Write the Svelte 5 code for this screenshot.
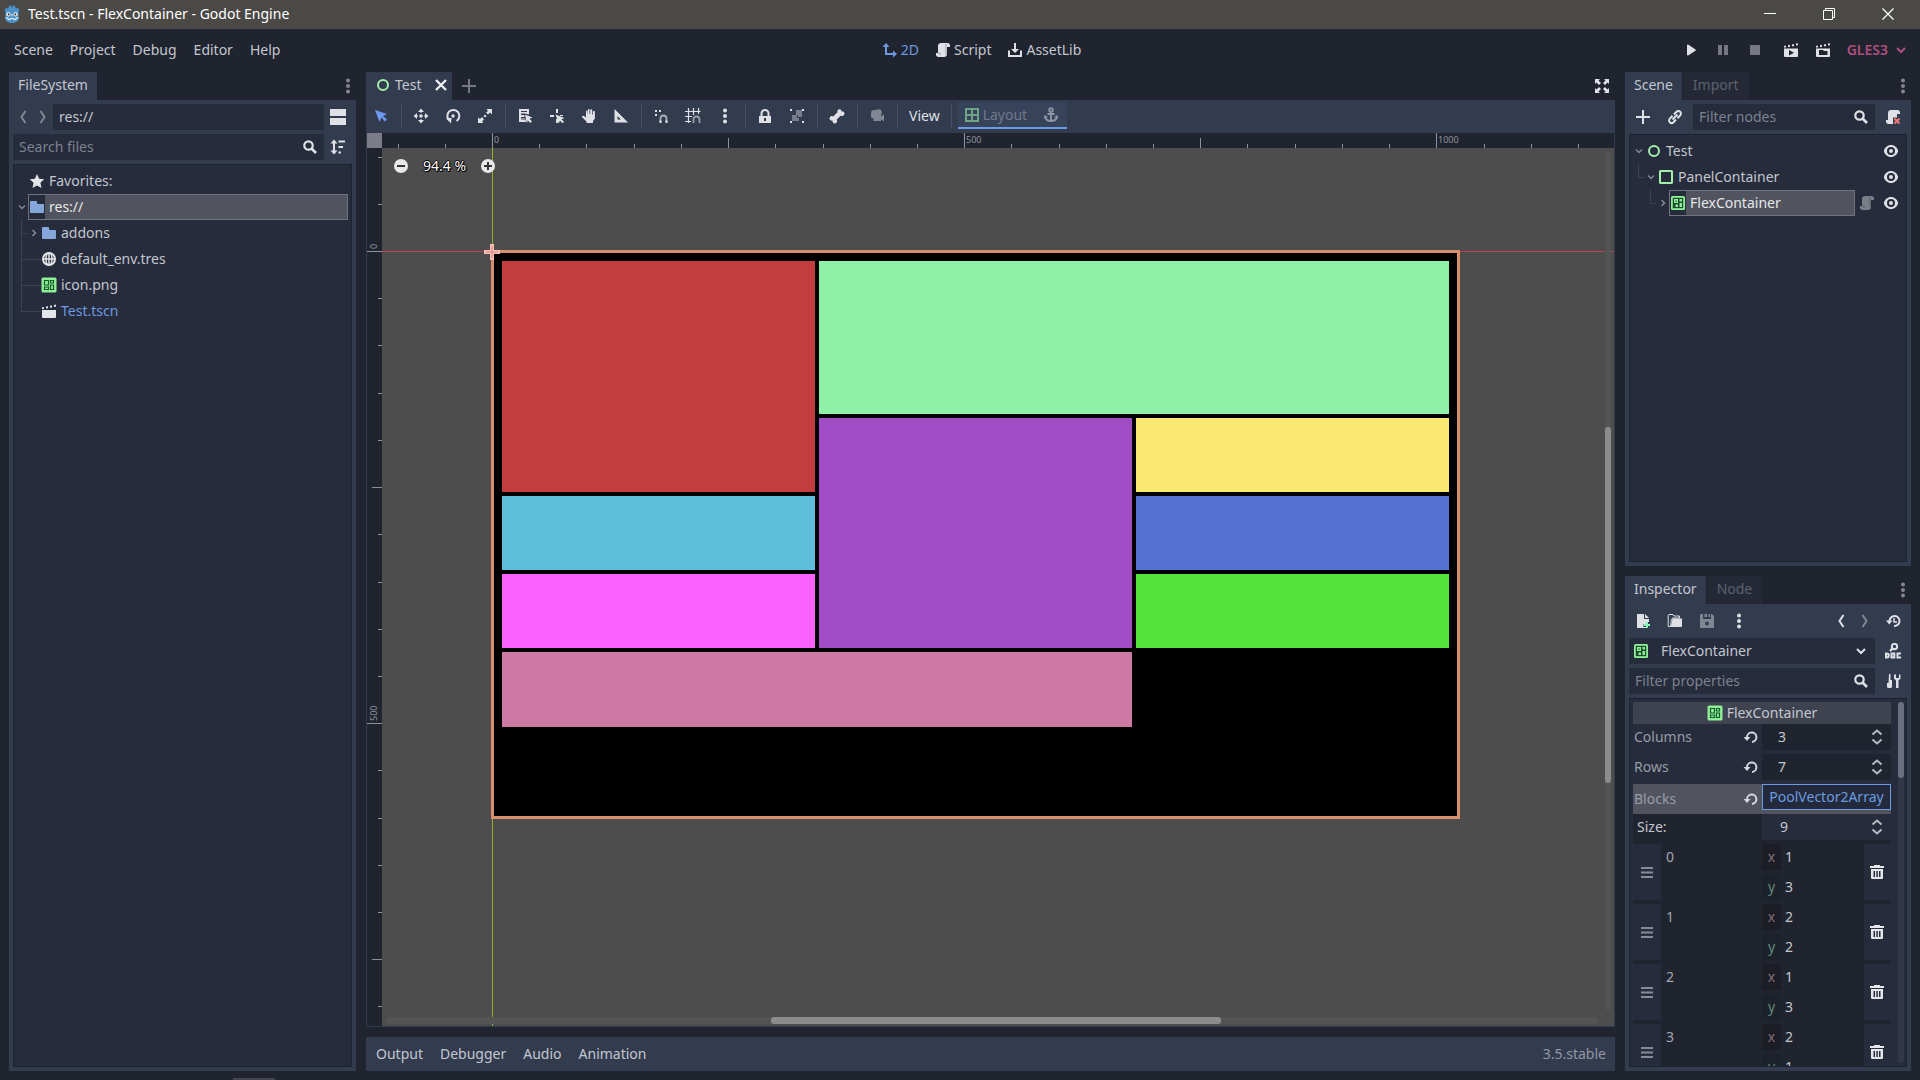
<script>
  const icons = {
    folder: '<path d="M2 2a1 1 0 0 0-1 1v10a1 1 0 0 0 1 1h12a1 1 0 0 0 1-1V6a1 1 0 0 0-1-1h-5a1 1 0 0 1-1-1V3a1 1 0 0 0-1-1z"/>',
    star: '<path d="M8 1l2.100 4.800 5.100.5-3.800 3.500 1.100 5.200L8 12.400 3.500 15l1.100-5.200L.8 6.300l5.100-.5z"/>',
    globe: '<g fill="none" stroke="currentColor"><circle cx="8" cy="8" r="6" stroke-width="2"/><ellipse cx="8" cy="8" rx="3" ry="6" stroke-width="1.500"/><path d="M2 8h12M8 2v12" stroke-width="1.500"/></g>',
    flex: '<rect x="0.500" y="0.500" width="15" height="15" rx="1.500" fill="#8eef97"/><g fill="none" stroke="#155a2c" stroke-width="1.200"><path d="M3.500 3.500h4v4.500h-4zM9.500 3.500h3v2.500h-3zM9.500 8h3v4.500h-3zM3.500 10h4v2.500h-4z"/></g>',
    flexdark: '<rect x="1" y="1" width="14" height="14" rx="1.500" fill="#8eef97"/><rect x="2.800" y="2.800" width="10.400" height="10.400" fill="#1c4a2c"/><path d="M4 4h4v4H4zM9.500 4H12v2.500H9.500zM9.500 8H12v4H9.500zM5.500 9.500H8V12H5.500z" fill="#8eef97"/><path d="M5.500 5.500h1.200v1.200H5.500z" fill="#1c4a2c"/>',
    scene: '<path d="M1 7h14v7a1 1 0 0 1-1 1H2a1 1 0 0 1-1-1z"/><path d="M1 4.500l2-.4v2H1zM5 3.600l2-.4v2l-2 .4zM9 2.800l2-.4v2l-2 .4zM13 2l2-.4v2l-2 .4z"/>',
    search: '<circle cx="6.500" cy="6.500" r="4.200" fill="none" stroke="currentColor" stroke-width="2.200"/><path d="M9.500 9.500l4.500 4.500" stroke="currentColor" stroke-width="2.600"/>',
    split: '<path d="M0 0h16v7H0zM0 9h16v7H0z"/>',
    sort: '<path d="M4 0.500l3.500 4H5v7h2.500L4 15.500.5 11.500H3v-7H.5zM8.500 1.500h6.500v2H8.500zM8.500 7h4.500v2H8.500zM8.500 12.500h2.500v2H8.500z"/>',
    dots: '<circle cx="8" cy="2.500" r="2"/><circle cx="8" cy="8" r="2"/><circle cx="8" cy="13.500" r="2"/>',
    left: '<path d="M10.500 2L6.500 8l4 6" fill="none" stroke="currentColor" stroke-width="2"/>',
    right: '<path d="M5.500 2l4 6-4 6" fill="none" stroke="currentColor" stroke-width="2"/>',
    down: '<path d="M4 6l4 4 4-4" fill="none" stroke="currentColor" stroke-width="2"/>',
    fold: '<path d="M6 4l4 4-4 4" fill="none" stroke="currentColor" stroke-width="2"/>',
    two: '<path d="M4 1l3.500 4H5v6h6V8.500l4 3.500-4 3.500V13H3V5H.5z"/>',
    script: '<path d="M6 1c-1.700 0-3 1.300-3 3v7H1v1.500C1 14 2 15 3.500 15H9c1.700 0 3-1.300 3-3V5h3V3.500C15 2 14 1 12.500 1z"/><path d="M11 2v10.500M3.500 11H5v2" stroke="#20242f" stroke-width=".8" fill="none" opacity=".45"/>',
    asset: '<path d="M7 1h2v6h3l-4 4-4-4h3z"/><path d="M2 8.500V14h12V8.500" fill="none" stroke="currentColor" stroke-width="2"/>',
    play: '<path d="M4 3.200v9.600c0 .6.600.900 1.100.6l7.400-4.700c.5-.3.500-1 0-1.300L5.100 2.600C4.600 2.300 4 2.600 4 3.200z"/>',
    pause: '<path d="M3 3h4v10H3zM9 3h4v10H9z"/>',
    stop: '<rect x="3" y="3" width="10" height="10" rx="1"/>',
    playscene: '<path fill-rule="evenodd" d="M1 6.500h14V14a1 1 0 0 1-1 1H2a1 1 0 0 1-1-1zM6 8v5.500l5-2.700z"/><path d="M1 4l2-.4v2H1zM5 3.200l2-.4v2l-2 .4zM9 2.400l2-.4v2l-2 .4zM13 1.600l2-.4v2l-2 .4z"/>',
    playcustom: '<path fill-rule="evenodd" d="M1 6.500h14V14a1 1 0 0 1-1 1H2a1 1 0 0 1-1-1zM4 8v5h8.500V9H9L8 8z"/><path d="M1 4l2-.4v2H1zM5 3.200l2-.4v2l-2 .4zM9 2.400l2-.4v2l-2 .4zM13 1.600l2-.4v2l-2 .4z"/>',
    expand: '<path d="M1 1h5L4.500 2.500l2.500 2.500L5 7 2.500 4.500 1 6zM15 1v5l-1.500-1.500L11 7 9 5l2.500-2.500L10 1zM1 15v-5l1.500 1.500L5 9l2 2-2.500 2.500L6 15zM15 15h-5l1.500-1.500L9 11l2-2 2.500 2.500L15 10z"/>',
    close: '<path d="M3 3l10 10M13 3L3 13" stroke="currentColor" stroke-width="2.400"/>',
    plus: '<path d="M8 1v14M1 8h14" stroke="currentColor" stroke-width="2"/>',
    node: '<circle cx="8" cy="8" r="5" fill="none" stroke="#a5efac" stroke-width="2"/>',
    panel: '<rect x="2" y="2" width="12" height="12" rx=".5" fill="none" stroke="#a5efac" stroke-width="2"/>',
    select: '<path d="M2 2l4.500 12 2-4.500 3.500 4 2-2-4-3.500L14 6z"/>',
    move: '<circle cx="8" cy="8" r="1.800"/><path d="M8 0.500l3 3.500H9L8 5 7 4H5zM8 15.500l3-3.500H9l-1-1-1 1H5zM.5 8L4 5v2l1 1-1 1v2zM15.500 8L12 5v2l-1 1 1 1v2z"/>',
    rotate: '<circle cx="8" cy="8" r="1.700"/><path d="M4.500 12.500A6 6 0 1 1 11.500 13" fill="none" stroke="currentColor" stroke-width="2"/><path d="M1 10h5.500L6 15.500z"/>',
    scale: '<path d="M9.500 1H15v5.500l-2-2-2 2L9 4.500l2-1.500zM1 9.500V15h5.500L5 13.500l2-2L5 9 3 11zM8 6.500L9.500 8 8 9.500 6.500 8z"/>',
    list: '<path fill-rule="evenodd" d="M2 1h10v5.500L8 5.500H4V7h3l.8 2H4v1.500h4l1 3V14H2zM4 3v1h6V3zM4 12h4v-.5H4z"/><path d="M8 6.500l7.500 3-3 1.200 2.500 2.600-1.700 1.700-2.500-2.500-1 2.700z"/>',
    pivot: '<path d="M7 1h2v4H7zM1 7h4v2H1zM7 11h2v4H7zM11 7h3v1h-3zM6.500 6.500l9 3.500-3 1.200 2.500 2.600-1.500 1.500-2.500-2.500-1.200 2.700z"/>',
    hand: '<path d="M7.500 1c.6 0 1 .4 1 1v4h.7V2.300c0-.6.400-1 1-1s1 .4 1 1V6.500h.7V4c0-.6.400-1 1-1s1 .4 1 1v6.500L12 13v2H5.500v-1.500L1.200 9.200c-.4-.5-.3-1 .2-1.300.8-.4 1.600 0 2 .4L5 9.500V3.500c0-.6.300-1 .8-1s.9.4.9 1V6h.3V2c0-.6 0-1 .5-1z"/>',
    ruler: '<path fill-rule="evenodd" d="M1.500 1v13.500H15zM4.500 8v3.500H8z"/>',
    snap: '<path d="M2 2h2v2H2zM6 2h2v2H6zM2 6h2v2H2z"/><path d="M7.500 14v-3.500a3 3 0 0 1 6 0V14" fill="none" stroke="currentColor" stroke-width="1.800" opacity=".7"/><path d="M6.500 12.500h2V15h-2zM12.500 12.500h2V15h-2z"/>',
    grid: '<path d="M3.500 0v15M8.500 0v7M13.500 0v6M0 3.500h15.500M0 8.500h7M0 13.500h6" stroke="currentColor" stroke-width="1.200"/><path d="M8.500 15v-3.500a3 3 0 0 1 6 0V15" fill="none" stroke="currentColor" stroke-width="1.800" opacity=".6"/>',
    lock: '<path fill-rule="evenodd" d="M8 1a4.500 4.500 0 0 0-4.500 4.500V8H2v7h12V8h-1.500V5.500A4.500 4.500 0 0 0 8 1zM8 3a2.500 2.500 0 0 1 2.500 2.500V8h-5V5.500A2.500 2.500 0 0 1 8 3zM7 10h2v3H7z"/>',
    group: '<path d="M1 1h2v2H1zM13 1h2v2h-2zM1 13h2v2H1zM13 13h2v2h-2z"/><path d="M7 2h6v7h-4V7H7zM3 7h5v3h2v3H3z" opacity=".4"/>',
    bone: '<path d="M10.500 1.200a2.200 2.200 0 0 0-2 3L4.200 8.500a2.300 2.300 0 1 0-.6 4 2.300 2.300 0 1 0 4-.7l4.200-4.300a2.300 2.300 0 1 0 .7-4 2.200 2.200 0 0 0-2-2.300z"/>',
    camera: '<circle cx="5" cy="5" r="3"/><circle cx="9.500" cy="4.500" r="3.300"/><path d="M2 6h10v2.500l3-2v7l-3-2V13H4.500v-2.500L2 9.500z"/>',
    layout: '<path d="M2 2h12v12H2zM8 2v12M2 8h12" fill="none" stroke="#8fd69b" stroke-width="2"/>',
    anchor: '<g fill="none" stroke="currentColor" stroke-width="1.800"><circle cx="8" cy="3" r="1.800"/><path d="M8 5v9M4.500 7h7M2 9.500C2.500 12.500 5 14 8 14s5.500-1.500 6-4.500"/></g><path d="M.8 11.500L1.500 8 5 10zM15.200 11.500L14.500 8 11 10z"/>',
    link: '<g fill="none" stroke="currentColor" stroke-width="2"><path d="M7 5.500l2.500-2.700a2.500 2.500 0 0 1 3.700 3.600L10.500 9.300M9 10.500l-2.500 2.700a2.500 2.500 0 0 1-3.700-3.600l2.700-2.900M5.500 10.500l5-5"/></g>',
    scriptx: '<path d="M6 1c-1.700 0-3 1.300-3 3v7H1v1.500C1 14 2 15 3.500 15H8V8.500h4V5h3V3.500C15 2 14 1 12.500 1z"/><path d="M9.500 9.500l5 5M14.500 9.500l-5 5" stroke="#ee7272" stroke-width="2.200"/>',
    eye: '<path fill-rule="evenodd" d="M8 2C4.500 2 1.700 4.500.8 8c.9 3.500 3.700 6 7.200 6s6.300-2.500 7.200-6C14.300 4.500 11.500 2 8 2zM8 4a4 4 0 1 1 0 8 4 4 0 0 1 0-8z"/><circle cx="8" cy="8" r="2"/>',
    newfile: '<path d="M2 1h7v5h5v3h-3v2H8.500v3H11v1H2zM10 1l4 4h-4z"/><path d="M12 9v6M9 12h6" stroke="#84ffb9" stroke-width="2"/>',
    open: '<path d="M2 1.500h4l1 1.500h5.500v2H5.500L4 8v4L2 14a1 1 0 0 1-.8-1V2.500a1 1 0 0 1 .8-1z" fill="none" stroke="currentColor"/><path d="M5.500 5.500h9.500v7.500a1 1 0 0 1-1 1H2.500L4 13z"/>',
    save: '<path fill-rule="evenodd" d="M2 1h2v5h8V1h1l2 2v11a1 1 0 0 1-1 1H2a1 1 0 0 1-1-1V2a1 1 0 0 1 1-1zM5.500 1H8v3H5.500zM9.500 1H11v3H9.500zM8 8.500a2 2 0 1 0 0 4 2 2 0 0 0 0-4z"/>',
    history: '<path d="M4.500 8A5 5 0 1 1 9 13" fill="none" stroke="currentColor" stroke-width="2"/><path d="M9 5v4h3" fill="none" stroke="currentColor" stroke-width="1.500"/><path d="M1 7.500h6.500L4.200 11.500z"/>',
    revert: '<path d="M4 8.500a4.700 4.700 0 1 1 5 4.500" fill="none" stroke="currentColor" stroke-width="2"/><path d="M.5 8h7L4 12z"/>',
    doc: '<circle cx="9.500" cy="3.500" r="2.700" fill="none" stroke="currentColor" stroke-width="2"/><path d="M7.500 5.500L5 8" stroke="currentColor" stroke-width="2.400"/><g fill="none" stroke="currentColor" stroke-width="2"><path d="M1 10.500v4h.8c2.700 0 2.700-4 0-4zM6.500 10.500h2.800v4H6.500zM16 10.500h-3.500v4H16"/></g>',
    tools: '<path d="M4 1h1.500v6H7v6.500a1.500 1.500 0 0 1-1.500 1.500h-2A1.500 1.500 0 0 1 2 13.500V10h1.500zM9 1.500v4l2 2V15h2.500V7.500l2-2v-4H14V5h-3V1.500z"/>',
    spin: '<path d="M3.500 5.500L8 1.500l4.500 4M3.500 10.500l4.500 4 4.500-4" fill="none" stroke="currentColor" stroke-width="2"/>',
    bars: '<path d="M2 3h12v2H2zM2 7.500h12v2H2zM2 12h12v2H2z"/>',
    trash: '<path fill-rule="evenodd" d="M5 1h6v1h4v2H1V2h4zM2 5h12v9a1 1 0 0 1-1 1H3a1 1 0 0 1-1-1zM4.500 7v6H6V7zM7.300 7v6h1.500V7zM10 7v6h1.500V7z"/>',
    minus: '<circle cx="8" cy="8" r="7" fill="#e8e8e8"/><path d="M4 8h8" stroke="#333" stroke-width="2"/>',
    plusround: '<circle cx="8" cy="8" r="7" fill="#e8e8e8"/><path d="M4 8h8M8 4v8" stroke="#333" stroke-width="2"/>',
    godot: '<path d="M1.500 5l1-2.500 1.500.7L5 2.500 5.200.8 7 .3 7.600 2h.8L9 .3l1.800.5.2 1.700 1 .7 1.500-.7 1 2.500-.7 1v6c0 2.500-2.500 4-5.800 4s-5.800-1.500-5.800-4V6z" fill="#4a92c9"/><circle cx="4.800" cy="8.300" r="1.900" fill="#fff"/><circle cx="11.200" cy="8.300" r="1.900" fill="#fff"/><circle cx="5" cy="8.400" r="1" fill="#414042"/><circle cx="11" cy="8.400" r="1" fill="#414042"/><path d="M8 8v2M2 11.500h2.500v1.500h2v-1h3v1h2v-1.500H14" fill="none" stroke="#fff" stroke-width=".8"/>',
    wmin: '<path d="M2 7.500h12" stroke="#fff" stroke-width="1"/>',
    wmax: '<path d="M2.500 4.500h9v9h-9zM4.500 4.500v-2h9v9h-2" fill="none" stroke="#fff" stroke-width="1"/>',
    wclose: '<path d="M2.500 2.500l11 11M13.500 2.500l-11 11" stroke="#fff" stroke-width="1.200"/>'
  };

  const tools = [
    ['select', 'accent'], '|', ['move'], ['rotate'], ['scale'], '|', ['list'], ['pivot'], ['hand'], ['ruler'], '|',
    ['snap'], ['grid'], ['dots'], '|', ['lock'], ['group'], '|', ['bone'], '|', ['camera', 'off'], '|'
  ];

  // Canvas geometry: screen pixels per project unit and where the origin falls.
  const scale = 0.9443;
  const origin = { x: 110, y: 103 };
  const ticks = (start, count) =>
    Array.from({ length: count }, (_, i) => {
      const n = i + start;
      return { at: Math.round(n * 50 * scale), len: n % 10 === 0 ? 15 : n % 5 === 0 ? 10 : 4, label: n % 10 === 0 ? n * 50 : null };
    });
  const hTicks = ticks(-2, 26);
  const vTicks = ticks(-2, 20);

  const blocks = [
    { c: '#c23d3e', col: '1', row: '1 / 4' },
    { c: '#8ff0a8', col: '2 / 4', row: '1 / 3' },
    { c: '#a04dc5', col: '2', row: '3 / 6' },
    { c: '#f9e973', col: '3', row: '3' },
    { c: '#5fbfdb', col: '1', row: '4' },
    { c: '#5371cf', col: '3', row: '4' },
    { c: '#f962fd', col: '1', row: '5' },
    { c: '#53e33b', col: '3', row: '5' },
    { c: '#cd79a4', col: '1 / 3', row: '6' }
  ];

  const vectors = [[1, 3], [2, 2], [1, 3], [2, 1]];
</script>

{#snippet icon(name)}
  <svg class="ic" viewBox="0 0 16 16" aria-hidden="true">{@html icons[name]}</svg>
{/snippet}

{#snippet btn(name, label, cls = '')}
  <button class="ib {cls}" aria-label={label}>{@render icon(name)}</button>
{/snippet}

<div class="app">
  <header class="title">
    <span class="name">{@render icon('godot')}Test.tscn - FlexContainer - Godot Engine</span>
    <span class="win">
      {@render btn('wmin', 'Minimize')}
      {@render btn('wmax', 'Restore')}
      {@render btn('wclose', 'Close')}
    </span>
  </header>

  <nav class="menu">
    <div class="group names">
      {#each ['Scene', 'Project', 'Debug', 'Editor', 'Help'] as m}<button class="txt">{m}</button>{/each}
    </div>
    <div class="group modes">
      <button class="txt accent">{@render icon('two')}2D</button>
      <button class="txt">{@render icon('script')}Script</button>
      <button class="txt">{@render icon('asset')}AssetLib</button>
    </div>
    <div class="group run">
      {@render btn('play', 'Play')}
      {@render btn('pause', 'Pause', 'off')}
      {@render btn('stop', 'Stop', 'off stop')}
      {@render btn('playscene', 'Play scene')}
      {@render btn('playcustom', 'Play custom scene')}
      <button class="txt gles">GLES3 {@render icon('down')}</button>
    </div>
  </nav>

  <main>
    <section class="dock files">
      <div class="tabs">
        <button class="tab on">FileSystem</button>
        {@render btn('dots', 'Dock options', 'end off')}
      </div>
      <div class="panel">
        <div class="bar">
          {@render btn('left', 'Back', 'nav off')}
          {@render btn('right', 'Forward', 'nav off')}
          <label class="field"><input value="res://" aria-label="Path" /></label>
          {@render btn('split', 'Toggle split', 'side')}
        </div>
        <div class="bar">
          <label class="field"><input placeholder="Search files" aria-label="Search files" />{@render icon('search')}</label>
          {@render btn('sort', 'Sort', 'side')}
        </div>
        <ul class="tree">
          <li class="row"><span class="arrow"></span><span class="item">{@render icon('star')}Favorites:</span></li>
          <li class="row">
            <span class="arrow">{@render icon('down')}</span>
            <span class="item sel"><i class="blue">{@render icon('folder')}</i>res://</span>
          </li>
          <li class="row l1 guide"><span class="arrow">{@render icon('fold')}</span><span class="item"><i class="blue">{@render icon('folder')}</i>addons</span></li>
          <li class="row l1 guide long"><span class="arrow"></span><span class="item">{@render icon('globe')}default_env.tres</span></li>
          <li class="row l1 guide long"><span class="arrow"></span><span class="item">{@render icon('flex')}icon.png</span></li>
          <li class="row l1 guide long last"><span class="arrow"></span><span class="item">{@render icon('scene')}<b>Test.tscn</b></span></li>
        </ul>
      </div>
    </section>

    <section class="center">
      <div class="tabs">
        <button class="tab on scene-tab">{@render icon('node')}Test {@render icon('close')}</button>
        {@render btn('plus', 'Add scene', 'off add')}
        {@render btn('expand', 'Distraction free', 'end')}
      </div>
      <div class="tools">
        {#each tools as t}
          {#if t === '|'}<span class="sep"></span>{:else}{@render btn(t[0], t[0], t[1])}{/if}
        {/each}
        <button class="txt view">View</button>
        <span class="sep"></span>
        <div class="layout">
          <button class="txt">{@render icon('layout')}Layout</button>
          {@render btn('anchor', 'Anchors')}
        </div>
      </div>
      <div class="viewport">
        <div class="corner"></div>
        <svg class="ruler hr">
          {#each hTicks as t}
            <rect x={origin.x + t.at} y={15 - t.len} width="1" height={t.len} />
            {#if t.label !== null}<text x={origin.x + t.at + 2} y="10">{t.label}</text>{/if}
          {/each}
        </svg>
        <svg class="ruler vr">
          {#each vTicks as t}
            <rect x={15 - t.len} y={origin.y + t.at} width={t.len} height="1" />
            {#if t.label !== null}<text transform="translate(10 {origin.y + t.at - 2}) rotate(-90)">{t.label}</text>{/if}
          {/each}
        </svg>
        <div class="canvas">
          <div class="axis-x"></div>
          <div class="axis-y"></div>
          <div class="frame">
            {#each blocks as b}
              <div style="background:{b.c};grid-column:{b.col};grid-row:{b.row}"></div>
            {/each}
          </div>
          <svg class="pivot" viewBox="0 0 16 16"><path d="M6 0h4v6h6v4h-6v6H6v-6H0V6h6z" fill="#f5c0b4" /><path d="M2 8h12M8 2v12" stroke="#e08080" stroke-width="1" /></svg>
          <div class="zoom">
            {@render btn('minus', 'Zoom out')}
            <span>94.4 %</span>
            {@render btn('plusround', 'Zoom in')}
          </div>
          <div class="vscroll"><div></div></div>
          <div class="hscroll"><div></div></div>
        </div>
      </div>
      <div class="bottom">
        {#each ['Output', 'Debugger', 'Audio', 'Animation'] as m}<button class="txt">{m}</button>{/each}
        <span class="version">3.5.stable</span>
      </div>
    </section>

    <div class="right">
      <section class="dock">
        <div class="tabs">
          <button class="tab on">Scene</button><button class="tab">Import</button>
          {@render btn('dots', 'Dock options', 'end off')}
        </div>
        <div class="panel">
          <div class="bar">
            {@render btn('plus', 'Add node')}
            {@render btn('link', 'Instance scene')}
            <label class="field"><input placeholder="Filter nodes" aria-label="Filter nodes" />{@render icon('search')}</label>
            {@render btn('scriptx', 'Detach script')}
          </div>
          <ul class="tree">
            <li class="row"><span class="arrow">{@render icon('down')}</span><span class="item">{@render icon('node')}Test</span>{@render btn('eye', 'Visible', 'eye')}</li>
            <li class="row l1 guide"><span class="arrow">{@render icon('down')}</span><span class="item">{@render icon('panel')}PanelContainer</span>{@render btn('eye', 'Visible', 'eye')}</li>
            <li class="row l2 guide"><span class="arrow">{@render icon('fold')}</span><span class="item sel"><i>{@render icon('flexdark')}</i>FlexContainer</span>{@render btn('script', 'Script', 'eye off')}{@render btn('eye', 'Visible', 'eye')}</li>
          </ul>
        </div>
      </section>

      <section class="dock">
        <div class="tabs">
          <button class="tab on">Inspector</button><button class="tab">Node</button>
          {@render btn('dots', 'Dock options', 'end off')}
        </div>
        <div class="panel">
          <div class="bar">
            {@render btn('newfile', 'New resource')}
            {@render btn('open', 'Open resource')}
            {@render btn('save', 'Save resource', 'off')}
            {@render btn('dots', 'More')}
            <span class="grow"></span>
            {@render btn('left', 'Previous', 'step')}
            {@render btn('right', 'Next', 'step off')}
            {@render btn('history', 'History')}
          </div>
          <div class="bar">
            <label class="field object">{@render icon('flexdark')}
              <select aria-label="Edited object"><option>FlexContainer</option></select>
              <i>{@render icon('down')}</i></label>
            {@render btn('doc', 'Documentation')}
          </div>
          <div class="bar">
            <label class="field"><input placeholder="Filter properties" aria-label="Filter properties" />{@render icon('search')}</label>
            {@render btn('tools', 'Property tools')}
          </div>
          <div class="inspect">
            <div class="props">
              <h2>{@render icon('flex')}FlexContainer</h2>
              {#each [['Columns', 3], ['Rows', 7]] as [name, v]}
                <div class="prop">
                  <label for={name}>{name}</label>{@render btn('revert', 'Revert', 'rev')}
                  <span class="value"><input id={name} value={v} />{@render icon('spin')}</span>
                </div>
              {/each}
              <div class="prop blocks">
                <span class="lab">Blocks</span>{@render btn('revert', 'Revert', 'rev')}
                <button class="array">PoolVector2Array</button>
              </div>
              <div class="sub">
                <div class="prop size">
                  <label for="size">Size:</label>
                  <span class="value"><input id="size" value="9" />{@render icon('spin')}</span>
                </div>
                {#each vectors as v, i}
                  <div class="vec">
                    <button class="cell handle" aria-label="Reorder">{@render icon('bars')}</button>
                    <span class="idx">{i}</span>
                    <div class="pair">
                      <label><span class="x">x</span><input value={v[0]} /></label>
                      <label><span class="y">y</span><input value={v[1]} /></label>
                    </div>
                    <button class="cell bin" aria-label="Remove">{@render icon('trash')}</button>
                  </div>
                {/each}
              </div>
            </div>
            <div class="pscroll"><div></div></div>
          </div>
        </div>
      </section>
    </div>
  </main>
  <footer><div></div></footer>
</div>

<style>
  :global(body) { background: #20242f; }
  .app {
    --base: #333b4f; --dark: #262c3b; --bg: #20242f; --text: #c3c7cf; --accent: #6d9ae0;
    height: 100vh; display: flex; flex-direction: column; overflow: hidden;
    background: var(--bg); color: var(--text);
    font: 14px/20px "Noto Sans", "Open Sans", sans-serif;
  }
  * { box-sizing: border-box; }
  button, input, select { font: inherit; color: inherit; background: none; border: 0; padding: 0; margin: 0; min-width: 0; border-radius: 0; outline: 0; }
  .ic { width: 16px; height: 16px; flex: none; display: block; fill: currentColor; }
  .ib { width: 32px; height: 26px; display: flex; align-items: center; justify-content: center; color: #dfe1e6; flex: none; }
  .off { opacity: 0.45; }
  .accent { color: var(--accent); }
  .txt { display: flex; align-items: center; gap: 3px; padding: 0 8px; white-space: nowrap; }

  .title { height: 29px; flex: none; background: #4a4945; color: #fff; display: flex; align-items: center; justify-content: space-between; padding: 0 3px 2px; }
  .name { display: flex; align-items: center; gap: 7px; }
  .name .ic { width: 18px; height: 18px; }
  .win { display: flex; }
  .win .ib { width: 59px; }

  .menu { height: 43px; flex: none; display: flex; justify-content: space-between; padding: 0 11px 2px 6px; }
  .group { display: flex; align-items: center; }
  .names { gap: 1px; }
  .modes .ic { color: #dfe1e6; }
  .modes .accent .ic { color: var(--accent); }
  .run { color: #dfe1e6; }
  .run .stop { margin-right: 4px; }
  .gles { color: #ad4f7f; font-weight: 600; gap: 5px; padding: 0 0 0 8px; }

  main { flex: 1; min-height: 0; display: flex; gap: 10px; padding: 0 9px; }
  .dock { display: flex; flex-direction: column; min-height: 0; }
  .files { width: 347px; flex: none; }
  .right { width: 286px; flex: none; display: flex; flex-direction: column; gap: 10px; }
  .right .dock { flex: 1 1 0; }
  .right .dock:last-child { flex-basis: 1px; }
  .tabs { display: flex; height: 28px; flex: none; align-items: center; }
  .tab { height: 28px; padding: 0 10px 2px; color: #5c6270; background: #242935; margin-right: 1px; }
  .tab.on { background: var(--base); color: var(--text); padding: 0 9px 2px; }
  .end { margin-left: auto; width: 16px; }
  .dock .end { color: #fff; }
  .panel { flex: 1; min-height: 0; background: var(--base); padding: 4px; display: flex; flex-direction: column; gap: 4px; }
  .bar { display: flex; height: 26px; flex: none; }
  .right .bar { gap: 4px; }
  .right .bar .ib { width: 28px; }
  .right .bar .step { width: 20px; }
  .grow { flex: 1; }
  .field { flex: 1; min-width: 0; display: flex; align-items: center; background: var(--dark); padding: 0 6px 1px; }
  .field input { flex: 1; }
  .field .ic { color: #dfe1e6; }
  input::placeholder { color: #7c828f; opacity: 1; }
  .nav { width: 20px; }
  .side { width: 28px; }

  .tree { flex: 1; margin: 0; list-style: none; background: var(--dark); border: 1px solid #1d2230; padding: 3px; }
  .files .tree { padding-left: 2px; }
  .row { display: flex; height: 26px; align-items: center; position: relative; }
  .l1 { padding-left: 12px; }
  .l2 { padding-left: 24px; }
  .arrow { width: 12px; height: 16px; flex: none; display: flex; justify-content: center; color: #858a96; }
  .arrow .ic { width: 12px; }
  .item { flex: 1; display: flex; align-items: center; gap: 4px; height: 26px; border: 1px solid transparent; white-space: nowrap; color: var(--text); }
  .item .ic { color: #e4e6ea; }
  .item b { font-weight: 400; color: var(--accent); }
  .item i { display: flex; align-items: center; height: 24px; }
  .item .blue .ic { color: #86a7dc; }
  .sel { background: #51545f; border-color: #70737d; color: #e6e7ea; }
  .sel i { background: var(--dark); }
  .guide::before { content: ""; position: absolute; left: 5px; top: 0; width: 5px; height: 13px; border-left: 1px solid #3c4251; border-bottom: 1px solid #3c4251; }
  .files .guide::after { content: ""; position: absolute; left: 5px; top: 0; height: 26px; border-left: 1px solid #3c4251; }
  .files .last::after { height: 13px; }
  .long::before { width: 19px; }
  .l2.guide::before { left: 17px; }
  .eye { width: 24px; }

  .center { flex: 1; min-width: 0; display: flex; flex-direction: column; }
  .scene-tab { display: flex; align-items: center; gap: 4px; }
  .scene-tab .ic:last-child { color: #eceef2; margin: 0 -6px 0 8px; }
  .center .end { margin-right: 5px; }
  .tools { height: 33px; flex: none; background: var(--base); display: flex; align-items: center; padding-bottom: 2px; color: #dfe1e6; }
  .tools .accent { color: #6d9af0; margin-left: -1px; }
  .sep { width: 8px; height: 24px; flex: none; background: linear-gradient(#474e60, #474e60) center / 1px 100% no-repeat; }
  .layout { height: 27px; display: flex; align-items: center; background: #37435b; border-bottom: 2px solid var(--accent); margin-left: 2px; }
  .layout .txt { color: #717989; padding: 0 8px 0 6px; }
  .layout .txt .ic { opacity: 0.65; }
  .layout .ib { color: #8f97a6; }

  .viewport { flex: 1; min-height: 0; display: grid; grid-template: 15px 1fr / 15px 1fr; border: solid var(--base); border-width: 0 1px 1px; }
  .corner { background: #7b7d86; }
  .ruler { width: 100%; height: 100%; min-width: 0; min-height: 0; display: block; overflow: hidden; fill: #8e929b; font-size: 9px; }
  .canvas { position: relative; background: #4d4d4d; overflow: hidden; }
  .axis-x { position: absolute; left: 0; right: 0; top: 103px; height: 1px; background: #b8424f; }
  .axis-y { position: absolute; top: 0; bottom: 0; left: 110px; width: 1px; background: #8fb42c; }
  .frame {
    position: absolute; left: 109px; top: 102px; width: 969px; height: 569px; border: 3px solid #d98f6b; background: #000;
    display: grid; grid-template: repeat(7, 1fr) / repeat(3, 1fr); gap: 4px; padding: 8px 8px 11px;
  }
  .pivot { position: absolute; left: 102px; top: 96px; width: 16px; height: 16px; }
  .zoom { position: absolute; left: 11px; top: 8px; display: flex; align-items: center; gap: 14px; color: #fff; }
  .zoom .ib { width: 16px; height: 20px; }
  .zoom span { text-shadow: 1px 0 #000, -1px 0 #000, 0 1px #000, 0 -1px #000, 1px 1px #000; }
  .vscroll { position: absolute; right: 3px; top: 4px; bottom: 16px; width: 6px; background: #545454; border-radius: 3px; padding-top: 275px; }
  .vscroll div { height: 356px; background: #8c8c8c; border-radius: 3px; }
  .hscroll { position: absolute; left: 4px; right: 16px; bottom: 2px; height: 7px; background: #545454; border-radius: 3px; padding-left: 385px; }
  .hscroll div { width: 450px; height: 7px; background: #8c8c8c; border-radius: 3px; }

  .bottom { height: 34px; flex: none; margin-top: 10px; background: var(--base); display: flex; gap: 1px; align-items: center; padding: 0 9px 0 2px; }
  .version { margin-left: auto; color: #9197a4; }

  .object select { flex: 1; appearance: none; padding-left: 12px; }
  .object i { color: #a0a4ae; }
  .object .ic { margin-left: -2px; }
  .inspect { flex: 1; min-height: 0; background: var(--dark); border: 1px solid #1d2230; padding: 3px 2px 0 3px; display: flex; gap: 7px; overflow: hidden; }
  .props { flex: 1; min-width: 0; height: 100%; overflow: hidden; }
  h2 { margin: 0; font: inherit; height: 22px; background: #3e434f; display: flex; align-items: center; justify-content: center; gap: 4px; }
  .prop { display: flex; height: 26px; margin-bottom: 4px; align-items: center; }
  .prop label, .lab { flex: 1; color: #979ca7; padding-left: 1px; }
  .rev { width: 22px; color: #d5d8de; }
  .value { width: 129px; height: 26px; background: #20242f; display: flex; align-items: center; padding: 0 6px 0 16px; }
  .value input { flex: 1; }
  .value .ic { color: #b5b9c2; }
  .blocks { background: #51545f; height: 30px; margin: 0; align-items: flex-start; }
  .blocks .lab, .blocks .rev { height: 30px; line-height: 30px; }
  .array { width: 129px; height: 26px; border: 1px solid var(--accent); background: #222a3b; color: var(--accent); }
  .sub { background: #20242f; }
  .size label { color: var(--text); padding-left: 4px; }
  .size .value { background: var(--dark); padding-left: 18px; }
  .vec { display: grid; grid-template-columns: 28px 1fr 102px 27px; height: 56px; margin-bottom: 4px; }
  .cell { background: var(--dark); display: flex; align-items: center; justify-content: center; color: #e4e6ea; }
  .bin { padding-right: 2px; }
  .handle { color: #868b97; }
  .idx { color: #a3a7b1; padding: 3px 0 0 5px; }
  .pair { display: grid; gap: 4px; }
  .pair label { display: flex; height: 26px; align-items: center; gap: 4px; }
  .pair span { width: 19px; height: 26px; line-height: 26px; text-align: center; background: #1d1d26; color: #7f7077; }
  .pair .y { background: #1b222a; color: #63897a; }
  .pair input { width: 50px; }
  .pscroll { width: 6px; background: #323848; border-radius: 3px; margin-bottom: 3px; flex: none; }
  .pscroll div { height: 76px; background: #6b7080; border-radius: 3px; }

  footer { height: 9px; flex: none; display: flex; align-items: flex-end; padding-left: 233px; }
  footer div { width: 42px; height: 2px; background: #45474f; }
</style>
